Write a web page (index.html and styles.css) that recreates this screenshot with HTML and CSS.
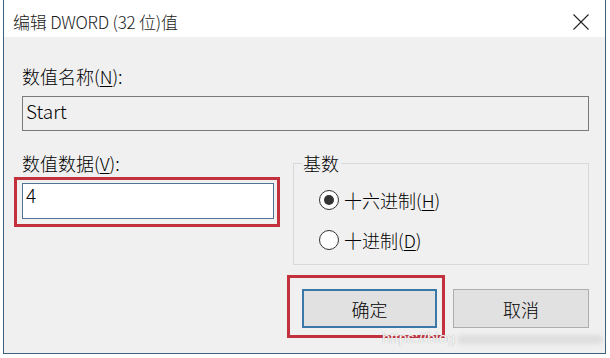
FILE: index.html
```html
<!DOCTYPE html>
<html lang="zh-CN">
<head>
<meta charset="utf-8">
<title>编辑 DWORD (32 位)值</title>
<link rel="stylesheet" href="styles.css">
</head>
<body>
<div class="dialog">
  <div class="titlebar">
    <span class="title">编辑 DWORD (32 位)值</span>
    <svg class="close" width="16" height="16" viewBox="0 0 16 16"><path d="M0.5 0.5 L15.5 15.5 M15.5 0.5 L0.5 15.5" stroke="#222" stroke-width="1.1" fill="none"/></svg>
  </div>
  <div class="body">
    <div class="label">数值名称(<u>N</u>):</div>
    <div class="field field-disabled">Start</div>
    <div class="row">
      <div class="col">
        <div class="label">数值数据(<u>V</u>):</div>
        <div class="field-wrap">
          <div class="field field-active">4</div>
          <span class="mark mark-field"></span>
        </div>
      </div>
      <fieldset class="group">
        <legend>基数</legend>
        <div class="radio radio-first"><span class="circle checked"></span><span class="radio-text">十六进制(<u>H</u>)</span></div>
        <div class="radio radio-second"><span class="circle"></span><span class="radio-text">十进制(<u>D</u>)</span></div>
      </fieldset>
    </div>
    <div class="buttons">
      <div class="btn-wrap">
        <div class="btn btn-default">确定</div>
        <span class="mark mark-btn"></span>
      </div>
      <div class="btn">取消</div>
    </div>
  </div>
  <div class="watermark"><span class="wm-text">https://blog</span><span class="wm-bar"></span></div>
</div>
</body>
</html>
```
FILE: styles.css
```css
html, body {
  margin: 0;
  background: #fff;
}
body {
  font-family: "Noto Sans CJK SC", sans-serif;
  font-size: 18px;
  font-weight: 300;
  color: #000;
}
.dialog {
  position: relative;
  margin-left: 3px;
  width: 603px;
  height: 354px;
  box-sizing: border-box;
  border: 1px solid #3f607e;
  border-top: 0;
  background: #f0f0f0;
  display: flex;
  flex-direction: column;
}
.titlebar {
  height: 37px;
  flex: none;
  background: #fff;
  display: flex;
  align-items: center;
  justify-content: space-between;
  padding: 6px 16px 0 9px;
  box-sizing: border-box;
}
.title {
  color: #1a1a1a;
  font-size: 17px;
  line-height: 24px;
  letter-spacing: -0.2px;
}
.close {
  display: block;
}
.body {
  padding: 27px 16px 0 18px;
  display: flex;
  flex-direction: column;
}
.label {
  line-height: 24px;
}
.label u, .radio u {
  text-underline-offset: 2px;
}
.field {
  box-sizing: border-box;
  height: 35px;
  margin-top: 8px;
  padding-left: 3px;
  font-size: 19px;
  line-height: 28px;
  border: 1px solid #7a7a7a;
}
.field-disabled {
  background: #f0f0f0;
}
.row {
  display: grid;
  grid-template-columns: 252px 1fr;
  column-gap: 19px;
  margin-top: 20px;
  align-items: start;
}
.field-wrap {
  position: relative;
  margin-top: 8px;
}
.field-active {
  margin-top: 0;
  height: 36px;
  line-height: 21px;
  padding-top: 0;
  background: #fff;
  border-color: #4f7496;
}
.mark {
  position: absolute;
  border: 3px solid #c3323c;
  pointer-events: none;
}
.mark-field {
  left: -8px;
  right: -6px;
  top: -6px;
  bottom: -8px;
}
.group {
  margin: 0;
  padding: 0 0 12px 8px;
  border: 1px solid #d9d9d9;
  min-width: 0;
}
.group legend {
  padding: 0 2px 0 1px;
  line-height: 24px;
}
.radio {
  display: flex;
  align-items: center;
  height: 24px;
  margin-left: 17px;
  gap: 5px;
}
.radio-first {
  margin-top: 13px;
}
.radio-second {
  margin-top: 16px;
}
.circle {
  width: 20px;
  height: 20px;
  box-sizing: border-box;
  border: 1px solid #333;
  border-radius: 50%;
  background: #fff;
  display: flex;
  align-items: center;
  justify-content: center;
}
.circle.checked::after {
  content: "";
  width: 10px;
  height: 10px;
  border-radius: 50%;
  background: #333;
}
.buttons {
  display: flex;
  justify-content: flex-end;
  gap: 16px;
  margin-top: 24px;
}
.btn-wrap {
  position: relative;
}
.btn {
  box-sizing: border-box;
  width: 136px;
  height: 39px;
  border: 1px solid #adadad;
  background: #e1e1e1;
  display: flex;
  align-items: center;
  justify-content: center;
}
.btn-default {
  width: 135px;
  border: 2px solid #3a78a8;
}
.mark-btn {
  left: -15px;
  right: -8px;
  top: -14px;
  bottom: -10px;
}
.watermark {
  position: absolute;
  left: 378px;
  top: 329px;
  display: flex;
  align-items: center;
  gap: 2px;
  pointer-events: none;
}
.wm-text {
  font-family: "Liberation Sans", sans-serif;
  font-size: 15px;
  color: rgba(255, 255, 255, 0.9);
  text-shadow: 0 0 1px rgba(140, 140, 140, 0.8);
}
.wm-bar {
  width: 146px;
  height: 9px;
  margin-top: 4px;
  border-radius: 5px;
  background: rgba(220, 220, 220, 0.9);
  filter: blur(2px);
}
```
